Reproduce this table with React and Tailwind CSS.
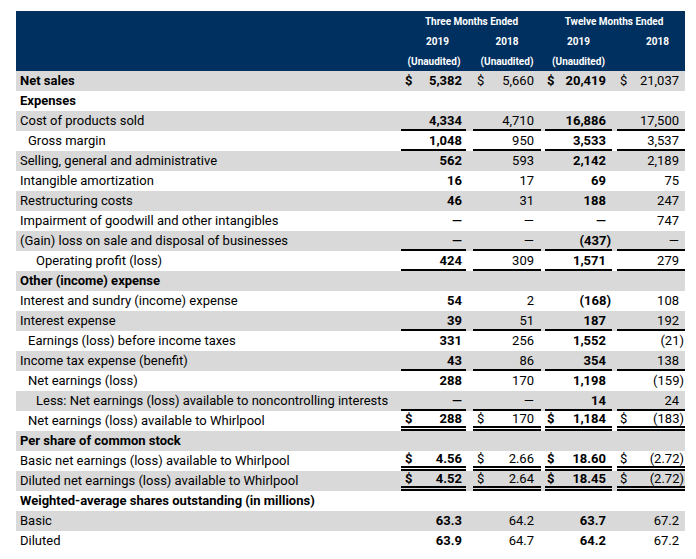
import React from "react";

const rows = [
  { label: "Net sales", bold: true, dollar: true, v: ["5,382", "5,660", "20,419", "21,037"] },
  { label: "Expenses", bold: true },
  { label: "Cost of products sold", v: ["4,334", "4,710", "16,886", "17,500"], line: "single" },
  { label: "Gross margin", indent: 1, v: ["1,048", "950", "3,533", "3,537"], line: "single" },
  { label: "Selling, general and administrative", v: ["562", "593", "2,142", "2,189"] },
  { label: "Intangible amortization", v: ["16", "17", "69", "75"] },
  { label: "Restructuring costs", v: ["46", "31", "188", "247"] },
  { label: "Impairment of goodwill and other intangibles", v: ["—", "—", "—", "747"] },
  { label: "(Gain) loss on sale and disposal of businesses", v: ["—", "—", "(437)", "—"], line: "single" },
  { label: "Operating profit (loss)", indent: 2, v: ["424", "309", "1,571", "279"], line: "single" },
  { label: "Other (income) expense", bold: true },
  { label: "Interest and sundry (income) expense", v: ["54", "2", "(168)", "108"] },
  { label: "Interest expense", v: ["39", "51", "187", "192"], line: "single" },
  { label: "Earnings (loss) before income taxes", indent: 1, v: ["331", "256", "1,552", "(21)"] },
  { label: "Income tax expense (benefit)", v: ["43", "86", "354", "138"], line: "single" },
  { label: "Net earnings (loss)", indent: 1, v: ["288", "170", "1,198", "(159)"] },
  { label: "Less: Net earnings (loss) available to noncontrolling interests", indent: 2, v: ["—", "—", "14", "24"], line: "single" },
  { label: "Net earnings (loss) available to Whirlpool", indent: 1, dollar: true, v: ["288", "170", "1,184", "(183)"], line: "double" },
  { label: "Per share of common stock", bold: true },
  { label: "Basic net earnings (loss) available to Whirlpool", dollar: true, v: ["4.56", "2.66", "18.60", "(2.72)"], line: "double" },
  { label: "Diluted net earnings (loss) available to Whirlpool", dollar: true, v: ["4.52", "2.64", "18.45", "(2.72)"], line: "double" },
  { label: "Weighted-average shares outstanding (in millions)", bold: true },
  { label: "Basic", v: ["63.3", "64.2", "63.7", "67.2"] },
  { label: "Diluted", v: ["63.9", "64.7", "64.2", "67.2"] },
];

// per column: outer inset (underline extent), inner text padding, weight
const cols = [
  { outer: "pl-[1px] pr-[5px]", inner: "pl-[4px] pr-[4px]", weight: "font-bold", hang: false },
  { outer: "pl-[2px] pr-[2px]", inner: "pl-[4px] pr-[7px]", weight: "font-normal", hang: false },
  { outer: "pl-[2px] pr-[2px]", inner: "pl-[2px] pr-[1px]", weight: "font-bold", hang: true },
  { outer: "pl-[3px] pr-0", inner: "pl-[3px] pr-[1px]", weight: "font-normal", hang: true },
];

const grid = "grid grid-cols-[384px_71px_72px_71px_71px]";

function lineClass(line, gray) {
  if (line === "single") return "shadow-[inset_0_-2px_0_#000]";
  if (line === "double")
    return gray
      ? "pb-[4px] shadow-[inset_0_-2px_0_#000,inset_0_-3px_0_#d9d9d9,inset_0_-5px_0_#000]"
      : "pb-[4px] shadow-[inset_0_-2px_0_#000,inset_0_-3px_0_#fff,inset_0_-5px_0_#000]";
  return "";
}

const indents = ["pl-1", "pl-3", "pl-5"];

export default function App() {
  return (
    <div className="min-h-screen bg-white pt-[11px] pl-4 font-['Roboto',sans-serif] text-[13px] text-black">
      <div className="w-[669px]">
        {/* Header */}
        <div className="bg-[#00305f] text-white text-[10px] font-bold">
          <div className={`${grid} h-5 items-center`}>
            <div />
            <div className="col-span-2 text-center">Three Months Ended</div>
            <div className="col-span-2 text-center">Twelve Months Ended</div>
          </div>
          <div className={`${grid} h-5 items-center`}>
            <div />
            <div className="text-center pl-1">2019</div>
            <div className="text-center">2018</div>
            <div className="text-center">2019</div>
            <div className="text-center pl-[16px]">2018</div>
          </div>
          <div className={`${grid} h-5 items-center`}>
            <div />
            <div className="text-center pr-[3px]">(Unaudited)</div>
            <div className="text-center">(Unaudited)</div>
            <div className="text-center">(Unaudited)</div>
            <div />
          </div>
        </div>

        {/* Body */}
        {rows.map((r, i) => {
          const gray = i % 2 === 0;
          return (
            <div key={i} className={`${grid} h-5 ${gray ? "bg-[#d9d9d9]" : "bg-white"}`}>
              <div
                className={`${indents[r.indent || 0]} flex items-center whitespace-nowrap ${
                  r.bold ? "font-bold" : ""
                }`}
              >
                {r.label}
              </div>
              {cols.map((c, j) => (
                <div key={j} className={`h-5 ${c.outer}`}>
                  {r.v && (
                    <div
                      className={`h-full flex items-center justify-between ${c.inner} ${c.weight} ${lineClass(
                        r.line,
                        gray
                      )}`}
                    >
                      <span>{r.dollar ? "$" : ""}</span>
                      <span className={c.hang && !r.v[j].endsWith(")") ? "pr-[5px]" : ""}>
                        {r.v[j]}
                      </span>
                    </div>
                  )}
                </div>
              ))}
            </div>
          );
        })}
      </div>
    </div>
  );
}
